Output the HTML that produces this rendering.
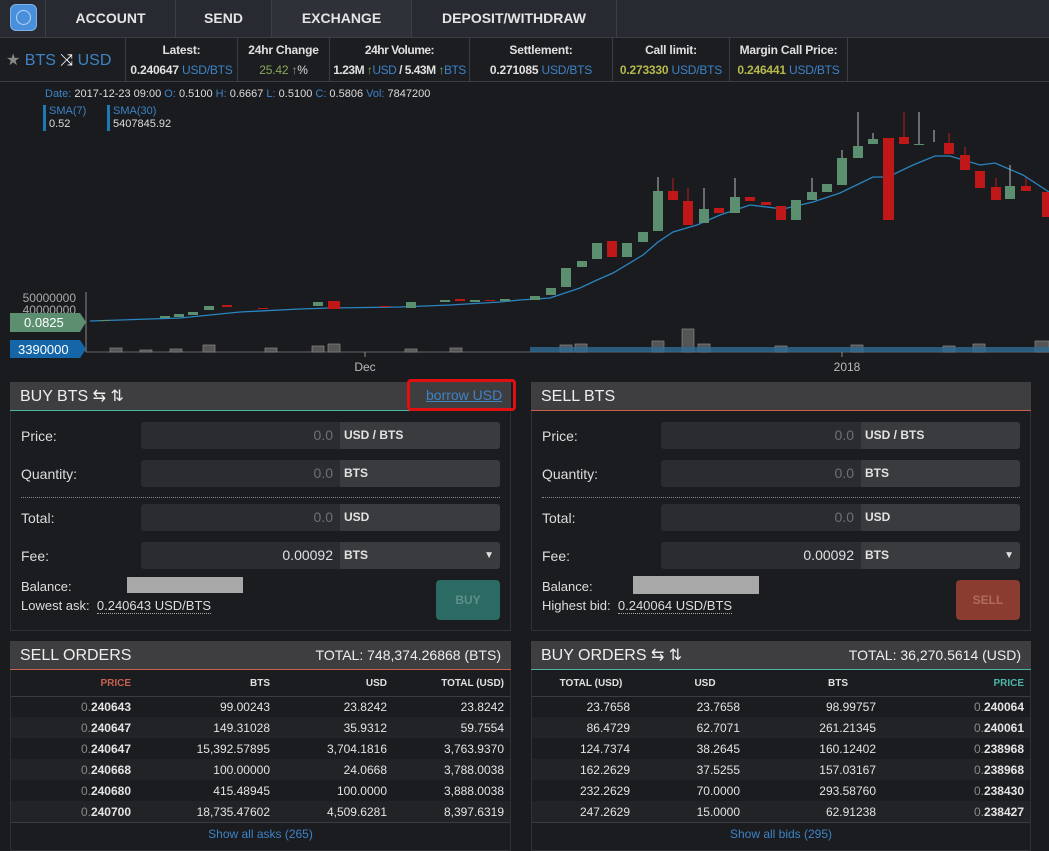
<!DOCTYPE html>
<html><head><meta charset="utf-8"><style>
*{margin:0;padding:0;box-sizing:border-box}
body{width:1049px;height:845px;overflow:hidden;background:#1a1b1f;font-family:"Liberation Sans",Arial,sans-serif;color:#ddd;position:relative}
.a{position:absolute}
.nav{left:0;top:0;width:1049px;height:38px;background:#272a30;border-bottom:1px solid #3b3e44}
.tab{top:0;height:37px;border-right:1px solid #3b3e44;font-weight:bold;font-size:14px;color:#e4e4e4;line-height:37px;text-align:center}
.bar2{left:0;top:38px;width:1049px;height:44px;background:#1c1d21;border-bottom:1px solid #3b3e44}
.st{top:38px;height:43px;border-right:1px solid #3b3e44;text-align:center;font-size:12px;white-space:nowrap;letter-spacing:-0.2px}
.st b{display:block;margin-top:5px;color:#e0e0e0}
.st div{margin-top:6px;font-weight:bold;color:#e0e0e0}
.bl{color:#3d83c6;font-weight:normal}
.gr{color:#89a85a}
.ye{color:#b7b94a}
.panel{border:1px solid #2f3136;background:#1b1c20}
.ph{background:#3e3e40;height:29px;font-size:16px;color:#eee;line-height:29px;padding-left:10px}
.lbl{font-size:14px;color:#ddd}
.inp{height:27px;background:#2a2c31;border-radius:3px 0 0 3px;text-align:right;padding-right:7px;line-height:27px;font-size:14px;color:#6e7074}
.unit{height:27px;background:#3a3b3e;border-radius:0 3px 3px 0;line-height:27px;font-size:12px;font-weight:bold;color:#e2e2e2;padding-left:4px}
table{border-collapse:collapse;font-size:12px;color:#e4e4e4}
td{height:21px;text-align:right}
tr.o td{background:#222327}
.th td{height:25px;font-size:10px;font-weight:bold;color:#e0e0e0;border-bottom:1px solid #3a3c41}
.z{color:#8a8a8a}
</style></head><body>
<div class="a nav"></div>
<div class="a" style="left:10px;top:4px;width:27px;height:27px;border-radius:6px;background:#4a8fdc;border:1px solid #7fb2ea"><div style="position:absolute;left:5px;top:5px;width:15px;height:15px;border-radius:50%;border:1px solid #b8d4f4"></div></div>
<div class="a tab" style="left:0;width:46px"></div>
<div class="a tab" style="left:46px;width:130px">ACCOUNT</div>
<div class="a tab" style="left:176px;width:96px">SEND</div>
<div class="a tab" style="left:272px;width:140px;background:#2e3137">EXCHANGE</div>
<div class="a tab" style="left:412px;width:205px">DEPOSIT/WITHDRAW</div>
<div class="a bar2"></div>
<div class="a" style="left:6px;top:50px;font-size:16px;color:#3d83c6;white-space:nowrap"><span style="color:#888">★</span> BTS <span style="color:#fff">⤨</span> USD</div>
<div class="a st" style="left:106px;width:20px"></div>
<div class="a st" style="left:126px;width:112px"><b>Latest:</b><div>0.240647 <span class="bl">USD/BTS</span></div></div>
<div class="a st" style="left:238px;width:92px"><b>24hr Change</b><div style="color:#89a85a;font-weight:normal">25.42 <span style="color:#999">↑</span><span style="color:#ddd">%</span></div></div>
<div class="a st" style="left:330px;width:140px;letter-spacing:-0.5px"><b>24hr Volume:</b><div>1.23M <span class="bl"><span class="gr">↑</span>USD</span> / 5.43M <span class="bl"><span class="gr">↑</span>BTS</span></div></div>
<div class="a st" style="left:470px;width:143px"><b>Settlement:</b><div>0.271085 <span class="bl">USD/BTS</span></div></div>
<div class="a st" style="left:613px;width:117px"><b>Call limit:</b><div><span class="ye">0.273330</span> <span class="bl">USD/BTS</span></div></div>
<div class="a st" style="left:730px;width:118px"><b>Margin Call Price:</b><div><span class="ye">0.246441</span> <span class="bl">USD/BTS</span></div></div>

<div class="a" style="left:45px;top:88px;font-size:11px;color:#ddd;white-space:nowrap"><span class="bl">Date:</span> 2017-12-23 09:00 <span class="bl">O:</span> 0.5100 <span class="bl">H:</span> 0.6667 <span class="bl">L:</span> 0.5100 <span class="bl">C:</span> 0.5806 <span class="bl">Vol:</span> 7847200</div>
<div class="a" style="left:43px;top:105px;border-left:3px solid #1f78b4;padding-left:3px;font-size:11px;line-height:13px"><span class="bl">SMA(7)</span><br>0.52</div>
<div class="a" style="left:107px;top:105px;border-left:3px solid #1f78b4;padding-left:3px;font-size:11px;line-height:13px"><span class="bl">SMA(30)</span><br>5407845.92</div>

<svg class="a" style="left:0;top:0" width="1049" height="380">
<g fill="#aaa" font-size="12" font-family="Liberation Sans" text-anchor="end"><text x="76" y="302">50000000</text><text x="76" y="314">40000000</text></g>
<line x1="86" y1="292" x2="86" y2="352" stroke="#888"/>
<line x1="86" y1="352" x2="1049" y2="352" stroke="#666"/>
<line x1="365" y1="352" x2="365" y2="357" stroke="#888"/><line x1="842" y1="352" x2="842" y2="357" stroke="#888"/>
<text x="365" y="371" fill="#bbb" font-size="12" text-anchor="middle" font-family="Liberation Sans">Dec</text>
<text x="847" y="371" fill="#bbb" font-size="12" text-anchor="middle" font-family="Liberation Sans">2018</text>
<g fill="#555" stroke="#888" stroke-width="0.7">
<rect x="110" y="348" width="12" height="4"/><rect x="140" y="350" width="12" height="2"/><rect x="170" y="349" width="12" height="3"/><rect x="203" y="345" width="12" height="7"/><rect x="265" y="348" width="12" height="4"/><rect x="312" y="346" width="12" height="6"/><rect x="328" y="344" width="12" height="8"/><rect x="405" y="349" width="12" height="3"/><rect x="450" y="348" width="12" height="4"/><rect x="560" y="345" width="12" height="7"/><rect x="575" y="344" width="12" height="8"/><rect x="652" y="341" width="12" height="11"/><rect x="682" y="329" width="12" height="23"/><rect x="698" y="344" width="12" height="8"/><rect x="775" y="346" width="12" height="6"/><rect x="851" y="345" width="12" height="7"/><rect x="943" y="346" width="12" height="6"/><rect x="973" y="344" width="12" height="8"/><rect x="1035" y="341" width="14" height="11"/></g>
<rect x="530" y="347" width="519" height="5" fill="#2e6a94" opacity="0.8"/>
<polyline fill="none" stroke="#2a85c0" stroke-width="1.3" points="90,321 180,318 240,312 300,309 330,308 400,307 450,305 500,302 520,300 550,298 580,288 597,280 613,273 643,255 658,242 673,232 697,225 720,215 750,205 783,209 813,202 840,193 873,177 888,177 913,165 935,156 950,156 980,165 995,163 1023,175 1049,192"/>
<g stroke="#bbb" stroke-width="1">
<line x1="658" y1="177" x2="658" y2="191"/><line x1="704" y1="188" x2="704" y2="209"/><line x1="735" y1="178" x2="735" y2="197"/><line x1="812" y1="178" x2="812" y2="192"/><line x1="842" y1="150" x2="842" y2="158"/><line x1="858" y1="112" x2="858" y2="146"/><line x1="919" y1="112" x2="919" y2="145"/><line x1="934" y1="130" x2="934" y2="142"/><line x1="1010" y1="165" x2="1010" y2="186"/><line x1="873" y1="133" x2="873" y2="139"/>
</g>
<g stroke="#c01818" stroke-width="1"><line x1="673" y1="178" x2="673" y2="191"/><line x1="688" y1="188" x2="688" y2="201"/><line x1="904" y1="112" x2="904" y2="137"/><line x1="949" y1="133" x2="949" y2="143"/><line x1="965" y1="147" x2="965" y2="155"/><line x1="996" y1="178" x2="996" y2="187"/><line x1="1026" y1="178" x2="1026" y2="186"/></g>
<g fill="#5b8f6f">
<rect x="100" y="320" width="10" height="1"/><rect x="160" y="316" width="10" height="2"/><rect x="174" y="314" width="10" height="3"/><rect x="188" y="312" width="10" height="3"/><rect x="204" y="306" width="10" height="4"/><rect x="313" y="302" width="10" height="4"/><rect x="406" y="302" width="10" height="6"/><rect x="440" y="300" width="10" height="2"/><rect x="470" y="300" width="10" height="2"/><rect x="500" y="299" width="10" height="2"/>
<rect x="530" y="296" width="10" height="4"/><rect x="546" y="288" width="10" height="7"/><rect x="561" y="268" width="10" height="19"/><rect x="577" y="261" width="10" height="6"/><rect x="592" y="243" width="10" height="16"/><rect x="622" y="243" width="10" height="14"/><rect x="638" y="232" width="10" height="10"/><rect x="653" y="191" width="10" height="40"/><rect x="699" y="209" width="10" height="14"/><rect x="730" y="197" width="10" height="16"/><rect x="791" y="200" width="10" height="20"/><rect x="807" y="192" width="10" height="8"/><rect x="822" y="184" width="10" height="8"/><rect x="837" y="158" width="10" height="27"/><rect x="853" y="146" width="10" height="12"/><rect x="868" y="139" width="10" height="5"/><rect x="914" y="144" width="10" height="1"/><rect x="1005" y="186" width="10" height="13"/></g>
<g fill="#c01818">
<rect x="222" y="305" width="10" height="2"/><rect x="258" y="308" width="10" height="1"/><rect x="328" y="301" width="12" height="8"/><rect x="380" y="306" width="10" height="1"/><rect x="455" y="299" width="10" height="2"/><rect x="485" y="300" width="10" height="1"/>
<rect x="607" y="241" width="10" height="16"/><rect x="668" y="191" width="10" height="9"/><rect x="683" y="201" width="10" height="24"/><rect x="714" y="208" width="10" height="5"/><rect x="745" y="197" width="10" height="4"/><rect x="761" y="202" width="10" height="3"/><rect x="776" y="206" width="10" height="14"/><rect x="883" y="138" width="11" height="82"/><rect x="899" y="137" width="10" height="7"/><rect x="944" y="143" width="10" height="11"/><rect x="960" y="155" width="10" height="15"/><rect x="975" y="171" width="10" height="17"/><rect x="991" y="187" width="10" height="13"/><rect x="1021" y="186" width="10" height="5"/><rect x="1042" y="192" width="7" height="25"/></g>
<path d="M10 313 H80 L86 322 L80 332 H10 Z" fill="#5b8f6f"/>
<text x="24" y="327" fill="#fff" font-size="13" font-family="Liberation Sans">0.0825</text>
<path d="M10 340 H80 L86 349 L80 358 H10 Z" fill="#1466a8"/>
<text x="18" y="354" fill="#fff" font-size="13" font-family="Liberation Sans">3390000</text>
</svg>

<!-- BUY panel -->
<div class="a panel" style="left:10px;top:382px;width:501px;height:249px"></div>
<div class="a ph" style="left:10px;top:382px;width:501px;border-bottom:1px solid #4bb4a6">BUY BTS ⇆ ⇅</div>
<div class="a" style="left:407px;top:379px;width:109px;height:32px;border:3px solid #e01010;border-radius:4px"></div>
<div class="a" style="left:426px;top:387px;font-size:14px;color:#3d83c6;text-decoration:underline">borrow USD</div>
<!-- SELL panel -->
<div class="a panel" style="left:531px;top:382px;width:500px;height:249px"></div>
<div class="a ph" style="left:531px;top:382px;width:500px;border-bottom:1px solid #c8604e">SELL BTS</div>

<div class="a lbl" style="left:21px;top:428px">Price:</div>
<div class="a lbl" style="left:21px;top:466px">Quantity:</div>
<div class="a lbl" style="left:21px;top:510px">Total:</div>
<div class="a lbl" style="left:21px;top:548px">Fee:</div>
<div class="a inp" style="left:141px;top:422px;width:199px">0.0</div><div class="a unit" style="left:340px;top:422px;width:160px">USD / BTS</div>
<div class="a inp" style="left:141px;top:460px;width:199px">0.0</div><div class="a unit" style="left:340px;top:460px;width:160px">BTS</div>
<div class="a" style="left:21px;top:497px;width:479px;border-top:1px dotted #888"></div>
<div class="a inp" style="left:141px;top:504px;width:199px">0.0</div><div class="a unit" style="left:340px;top:504px;width:160px">USD</div>
<div class="a inp" style="left:141px;top:542px;width:199px;color:#e0e0e0">0.00092</div><div class="a unit" style="left:340px;top:542px;width:160px">BTS<span style="position:absolute;right:6px;font-size:10px">▼</span></div>
<div class="a lbl" style="left:21px;top:579px;font-size:13px">Balance:</div>
<div class="a" style="left:127px;top:577px;width:116px;height:16px;background:#a8a8a8"></div>
<div class="a lbl" style="left:21px;top:598px;font-size:13px">Lowest ask: &nbsp;<span style="border-bottom:1px dotted #aaa">0.240643 USD/BTS</span></div>
<div class="a" style="left:436px;top:580px;width:64px;height:40px;background:#2c6b64;border-radius:4px;color:#5e8f8a;font-size:12px;font-weight:bold;text-align:center;line-height:40px">BUY</div>

<div class="a lbl" style="left:542px;top:428px">Price:</div>
<div class="a lbl" style="left:542px;top:466px">Quantity:</div>
<div class="a lbl" style="left:542px;top:510px">Total:</div>
<div class="a lbl" style="left:542px;top:548px">Fee:</div>
<div class="a inp" style="left:661px;top:422px;width:200px">0.0</div><div class="a unit" style="left:861px;top:422px;width:159px">USD / BTS</div>
<div class="a inp" style="left:661px;top:460px;width:200px">0.0</div><div class="a unit" style="left:861px;top:460px;width:159px">BTS</div>
<div class="a" style="left:542px;top:497px;width:478px;border-top:1px dotted #888"></div>
<div class="a inp" style="left:661px;top:504px;width:200px">0.0</div><div class="a unit" style="left:861px;top:504px;width:159px">USD</div>
<div class="a inp" style="left:661px;top:542px;width:200px;color:#e0e0e0">0.00092</div><div class="a unit" style="left:861px;top:542px;width:159px">BTS<span style="position:absolute;right:6px;font-size:10px">▼</span></div>
<div class="a lbl" style="left:542px;top:579px;font-size:13px">Balance:</div>
<div class="a" style="left:633px;top:576px;width:126px;height:18px;background:#a8a8a8"></div>
<div class="a lbl" style="left:542px;top:598px;font-size:13px">Highest bid: &nbsp;<span style="border-bottom:1px dotted #aaa">0.240064 USD/BTS</span></div>
<div class="a" style="left:956px;top:580px;width:64px;height:40px;background:#8a3c30;border-radius:4px;color:#b06a60;font-size:12px;font-weight:bold;text-align:center;line-height:40px">SELL</div>

<!-- SELL ORDERS -->
<div class="a panel" style="left:10px;top:641px;width:501px;height:210px"></div>
<div class="a ph" style="left:10px;top:641px;width:501px;border-bottom:1px solid #c8604e">SELL ORDERS<span style="position:absolute;right:10px;font-size:14px">TOTAL: 748,374.26868 (BTS)</span></div>
<table class="a" style="left:11px;top:671px;width:499px">
<tr class="th"><td style="width:120px;color:#c8604e">PRICE</td><td style="width:139px">BTS</td><td style="width:117px">USD</td><td style="padding-right:6px">TOTAL (USD)</td></tr>
<tr><td><span class="z">0.</span><b>240643</b></td><td>99.00243</td><td>23.8242</td><td style="padding-right:6px">23.8242</td></tr>
<tr class="o"><td><span class="z">0.</span><b>240647</b></td><td>149.31028</td><td>35.9312</td><td style="padding-right:6px">59.7554</td></tr>
<tr><td><span class="z">0.</span><b>240647</b></td><td>15,392.57895</td><td>3,704.1816</td><td style="padding-right:6px">3,763.9370</td></tr>
<tr class="o"><td><span class="z">0.</span><b>240668</b></td><td>100.00000</td><td>24.0668</td><td style="padding-right:6px">3,788.0038</td></tr>
<tr><td><span class="z">0.</span><b>240680</b></td><td>415.48945</td><td>100.0000</td><td style="padding-right:6px">3,888.0038</td></tr>
<tr class="o"><td><span class="z">0.</span><b>240700</b></td><td>18,735.47602</td><td>4,509.6281</td><td style="padding-right:6px">8,397.6319</td></tr>
</table>
<div class="a" style="left:11px;top:822px;width:499px;border-top:1px solid #3a3c41;text-align:center;font-size:12px;color:#3d83c6;padding-top:4px">Show all asks (265)</div>

<!-- BUY ORDERS -->
<div class="a panel" style="left:531px;top:641px;width:500px;height:210px"></div>
<div class="a ph" style="left:531px;top:641px;width:500px;border-bottom:1px solid #4bb4a6">BUY ORDERS ⇆ ⇅<span style="position:absolute;right:10px;font-size:14px">TOTAL: 36,270.5614 (USD)</span></div>
<table class="a" style="left:532px;top:671px;width:498px">
<tr class="th"><td style="width:98px;text-align:center;padding-left:20px">TOTAL (USD)</td><td style="width:110px;text-align:center;padding-left:40px">USD</td><td style="width:136px;text-align:center;padding-left:60px">BTS</td><td style="padding-right:6px;color:#4bb4a6">PRICE</td></tr>
<tr><td>23.7658</td><td>23.7658</td><td>98.99757</td><td style="padding-right:6px"><span class="z">0.</span><b>240064</b></td></tr>
<tr class="o"><td>86.4729</td><td>62.7071</td><td>261.21345</td><td style="padding-right:6px"><span class="z">0.</span><b>240061</b></td></tr>
<tr><td>124.7374</td><td>38.2645</td><td>160.12402</td><td style="padding-right:6px"><span class="z">0.</span><b>238968</b></td></tr>
<tr class="o"><td>162.2629</td><td>37.5255</td><td>157.03167</td><td style="padding-right:6px"><span class="z">0.</span><b>238968</b></td></tr>
<tr><td>232.2629</td><td>70.0000</td><td>293.58760</td><td style="padding-right:6px"><span class="z">0.</span><b>238430</b></td></tr>
<tr class="o"><td>247.2629</td><td>15.0000</td><td>62.91238</td><td style="padding-right:6px"><span class="z">0.</span><b>238427</b></td></tr>
</table>
<div class="a" style="left:532px;top:822px;width:498px;border-top:1px solid #3a3c41;text-align:center;font-size:12px;color:#3d83c6;padding-top:4px">Show all bids (295)</div>
</body></html>
